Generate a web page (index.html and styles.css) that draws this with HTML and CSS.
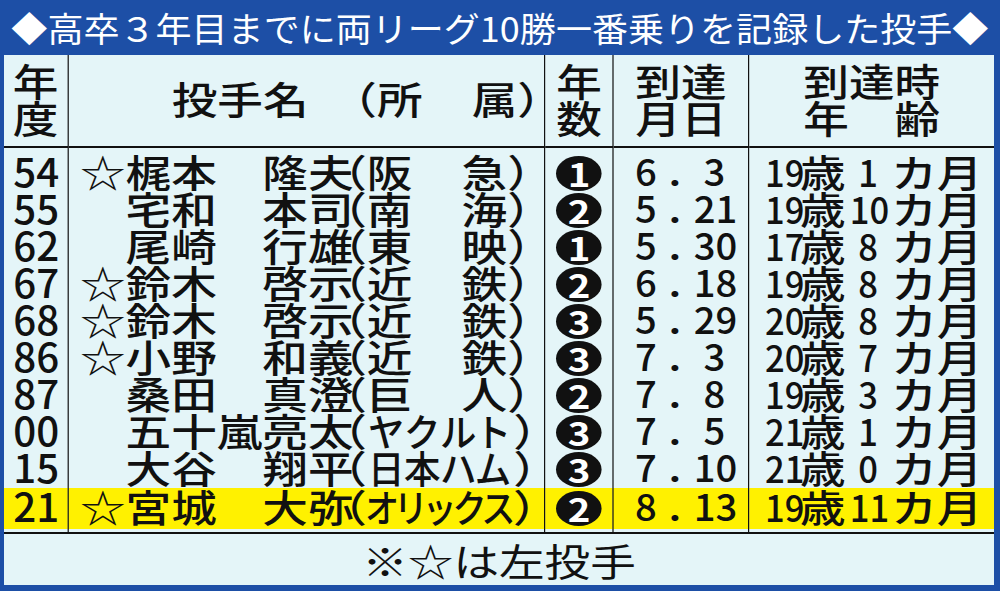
FILE: index.html
```html
<!DOCTYPE html>
<html lang="ja">
<head>
<meta charset="utf-8">
<title>高卒３年目までに両リーグ10勝一番乗りを記録した投手</title>
<link rel="stylesheet" href="styles.css">
</head>
<body>
<h1 class="title"><span class="title-text">◆高卒３年目までに両リーグ10勝一番乗りを記録した投手◆</span></h1>
<table class="record">
  <colgroup>
    <col class="c-year"><col class="c-name"><col class="c-num"><col class="c-date"><col class="c-age">
  </colgroup>
  <thead>
    <tr class="head">
      <th><span class="stack">年<br>度</span></th>
      <th><div class="nm hdr"><span class="lbl">投手名</span><span class="team"><span>（所</span><span>属）</span></span></div></th>
      <th><span class="stack">年<br>数</span></th>
      <th><span class="stack">到達<br>月日</span></th>
      <th><span class="stack">到達時<br>年　齢</span></th>
    </tr>
  </thead>
  <tbody>
    <tr class="spacer top"><td></td><td></td><td></td><td></td><td></td></tr>
    <tr class="row">
      <td class="yr"><span>54</span></td>
      <td><div class="nm"><span class="star">☆</span><span class="sur">梶本</span><span class="given">隆夫</span><span class="team"><span>（阪</span><span>急）</span></span></div></td>
      <td class="num"><span class="circ">1</span></td>
      <td><div class="date"><span class="m">6</span><span class="dot">.</span><span class="d">3</span></div></td>
      <td><div class="age"><span class="n2">19</span><span>歳</span><span class="n1">1</span><span>カ</span><span>月</span></div></td>
    </tr>
    <tr class="row">
      <td class="yr"><span>55</span></td>
      <td><div class="nm"><span class="star"></span><span class="sur">宅和</span><span class="given">本司</span><span class="team"><span>（南</span><span>海）</span></span></div></td>
      <td class="num"><span class="circ">2</span></td>
      <td><div class="date"><span class="m">5</span><span class="dot">.</span><span class="d">21</span></div></td>
      <td><div class="age"><span class="n2">19</span><span>歳</span><span class="n1">10</span><span>カ</span><span>月</span></div></td>
    </tr>
    <tr class="row">
      <td class="yr"><span>62</span></td>
      <td><div class="nm"><span class="star"></span><span class="sur">尾崎</span><span class="given">行雄</span><span class="team"><span>（東</span><span>映）</span></span></div></td>
      <td class="num"><span class="circ">1</span></td>
      <td><div class="date"><span class="m">5</span><span class="dot">.</span><span class="d">30</span></div></td>
      <td><div class="age"><span class="n2">17</span><span>歳</span><span class="n1">8</span><span>カ</span><span>月</span></div></td>
    </tr>
    <tr class="row">
      <td class="yr"><span>67</span></td>
      <td><div class="nm"><span class="star">☆</span><span class="sur">鈴木</span><span class="given">啓示</span><span class="team"><span>（近</span><span>鉄）</span></span></div></td>
      <td class="num"><span class="circ">2</span></td>
      <td><div class="date"><span class="m">6</span><span class="dot">.</span><span class="d">18</span></div></td>
      <td><div class="age"><span class="n2">19</span><span>歳</span><span class="n1">8</span><span>カ</span><span>月</span></div></td>
    </tr>
    <tr class="row">
      <td class="yr"><span>68</span></td>
      <td><div class="nm"><span class="star">☆</span><span class="sur">鈴木</span><span class="given">啓示</span><span class="team"><span>（近</span><span>鉄）</span></span></div></td>
      <td class="num"><span class="circ">3</span></td>
      <td><div class="date"><span class="m">5</span><span class="dot">.</span><span class="d">29</span></div></td>
      <td><div class="age"><span class="n2">20</span><span>歳</span><span class="n1">8</span><span>カ</span><span>月</span></div></td>
    </tr>
    <tr class="row">
      <td class="yr"><span>86</span></td>
      <td><div class="nm"><span class="star">☆</span><span class="sur">小野</span><span class="given">和義</span><span class="team"><span>（近</span><span>鉄）</span></span></div></td>
      <td class="num"><span class="circ">3</span></td>
      <td><div class="date"><span class="m">7</span><span class="dot">.</span><span class="d">3</span></div></td>
      <td><div class="age"><span class="n2">20</span><span>歳</span><span class="n1">7</span><span>カ</span><span>月</span></div></td>
    </tr>
    <tr class="row">
      <td class="yr"><span>87</span></td>
      <td><div class="nm"><span class="star"></span><span class="sur">桑田</span><span class="given">真澄</span><span class="team"><span>（巨</span><span>人）</span></span></div></td>
      <td class="num"><span class="circ">2</span></td>
      <td><div class="date"><span class="m">7</span><span class="dot">.</span><span class="d">8</span></div></td>
      <td><div class="age"><span class="n2">19</span><span>歳</span><span class="n1">3</span><span>カ</span><span>月</span></div></td>
    </tr>
    <tr class="row">
      <td class="yr"><span>00</span></td>
      <td><div class="nm"><span class="star"></span><span class="full">五十嵐亮太</span><span class="team long"><span class="p">（</span><span class="k">ヤ</span><span class="k">ク</span><span class="k">ル</span><span class="k">ト</span><span class="p">）</span></span></div></td>
      <td class="num"><span class="circ">3</span></td>
      <td><div class="date"><span class="m">7</span><span class="dot">.</span><span class="d">5</span></div></td>
      <td><div class="age"><span class="n2">21</span><span>歳</span><span class="n1">1</span><span>カ</span><span>月</span></div></td>
    </tr>
    <tr class="row">
      <td class="yr"><span>15</span></td>
      <td><div class="nm"><span class="star"></span><span class="sur">大谷</span><span class="given">翔平</span><span class="team long"><span class="p">（</span><span class="k">日</span><span class="k">本</span><span class="k">ハ</span><span class="k">ム</span><span class="p">）</span></span></div></td>
      <td class="num"><span class="circ">3</span></td>
      <td><div class="date"><span class="m">7</span><span class="dot">.</span><span class="d">10</span></div></td>
      <td><div class="age"><span class="n2">21</span><span>歳</span><span class="n1">0</span><span>カ</span><span>月</span></div></td>
    </tr>
    <tr class="row hl">
      <td class="yr"><span>21</span></td>
      <td><div class="nm"><span class="star">☆</span><span class="sur">宮城</span><span class="given">大弥</span><span class="team long five"><span class="p">（</span><span class="k">オ</span><span class="k">リ</span><span class="k">ッ</span><span class="k">ク</span><span class="k">ス</span><span class="p">）</span></span></div></td>
      <td class="num"><span class="circ">2</span></td>
      <td><div class="date"><span class="m">8</span><span class="dot">.</span><span class="d">13</span></div></td>
      <td><div class="age"><span class="n2">19</span><span>歳</span><span class="n1">11</span><span>カ</span><span>月</span></div></td>
    </tr>
    <tr class="spacer bottom"><td></td><td></td><td></td><td></td><td></td></tr>
  </tbody>
  <tfoot>
    <tr><td class="note" colspan="5">※☆は左投手</td></tr>
  </tfoot>
</table>
</body>
</html>
```

FILE: styles.css
```css
* { box-sizing: border-box; }
html, body { margin: 0; padding: 0; }
body {
  width: 1000px;
  height: 591px;
  overflow: hidden;
  background: #1d4fa6;
  font-family: "Noto Sans CJK JP", "Noto Sans", sans-serif;
  color: #111;
}

.title {
  margin: 0;
  height: 55px;
  font-size: 34px;
  font-weight: 400;
  line-height: 55px;
  color: #fff;
  text-align: center;
  white-space: nowrap;
}
.title-text { display: inline-block; transform: scaleX(1.06); }

.record {
  margin-left: 4px;
  width: 825px;
  table-layout: fixed;
  border-collapse: collapse;
  transform: scaleX(1.2);
  transform-origin: 0 0;
  background: #e4f5f8;
  font-size: 38px;
  font-weight: 500;
}
.c-year { width: 53.3px; }
.c-name { width: 397.5px; }
.c-num  { width: 56.7px; }
.c-date { width: 113.3px; }
.c-age  { width: 204.2px; }

.record th, .record td {
  padding: 0;
  border-left: 1.7px solid #111;
  white-space: nowrap;
}
.record tr > :first-child { border-left: none; }

.head th {
  height: 92px;
  padding-bottom: 6px;
  border-bottom: 2px solid #111;
  font-weight: 500;
  line-height: 37px;
  vertical-align: middle;
  text-align: center;
}
.stack { display: inline-block; }

.spacer.top td { height: 8px; }
.spacer.bottom td { height: 4px; }

.row td { height: 37px; line-height: 31px; vertical-align: middle; }
.row.hl td { height: 41px; background: #fff100; }

.yr { text-align: center; font-size: 40px; }
.yr span { display: inline-block; height: 37px; padding-bottom: 6px; transform: scaleX(.84); }

.nm { display: flex; align-items: baseline; height: 37px; padding-left: 9.5px; padding-bottom: 6px; text-align: left; }
.nm.hdr { height: auto; padding-left: 86px; padding-bottom: 0; line-height: 37px; }
.hdr .lbl { width: 152px; }
.star { width: 38px; font-weight: 400; }
.sur { width: 114px; }
.given { width: 68px; }
.full { width: 182px; }
.team {
  display: flex;
  justify-content: space-between;
  width: 155px;
  font-feature-settings: "halt";
}
.team.long { width: 160px; }
.team .p { width: 19px; }
.team .k { display: flex; justify-content: center; width: 27px; transform: scaleX(.8); }
.team.five .k { width: 24px; transform: scaleX(.75); }

.num { padding: 1px 0; }
.circ {
  display: block;
  margin: 0 auto;
  width: 38px;
  height: 35px;
  border-radius: 50%;
  background: #111;
  color: #fff;
  font-size: 32px;
  font-weight: 700;
  line-height: 34px;
  text-align: center;
}

.date { display: flex; align-items: baseline; height: 37px; padding-left: 16px; padding-bottom: 6px; font-size: 37px; }
.date span { display: inline-block; text-align: center; }
.date .m { width: 22px; transform: scaleX(.86); }
.date .dot { width: 26px; }
.date .d { width: 40px; transform: scaleX(.86); }

.age { display: flex; align-items: baseline; height: 37px; padding-left: 10px; padding-bottom: 6px; }
.age .n2 { width: 32px; font-size: 36px; text-align: center; transform: scaleX(.8); }
.age .n1 { width: 38px; font-size: 36px; text-align: center; transform: scaleX(.8); }

.note {
  height: 51px;
  border-top: 2px solid #111;
  text-align: center;
  font-size: 38px;
  font-weight: 400;
  line-height: 51px;
}
```
